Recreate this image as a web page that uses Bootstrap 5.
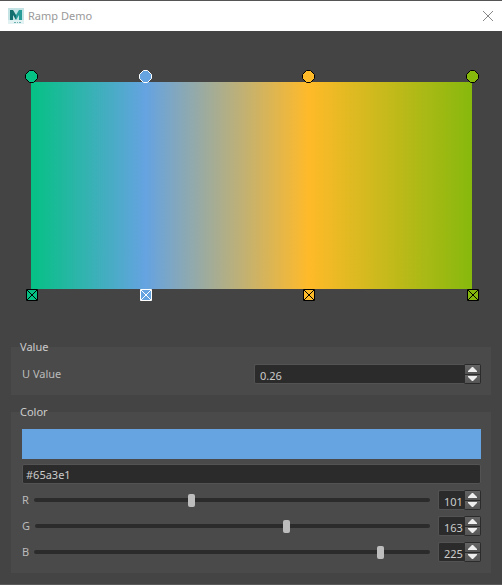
<!DOCTYPE html>
<html lang="en">
<head>
<meta charset="utf-8">
<meta name="viewport" content="width=device-width, initial-scale=1">
<title>Ramp Demo</title>
<link rel="stylesheet" href="https://cdn.jsdelivr.net/npm/bootstrap@5.3.0/dist/css/bootstrap.min.css">
<style>
  body { background: #444; color: #bbb; font: 11px/16px "Noto Sans", "Open Sans", sans-serif; }
  .window { border-top: 1px solid #555; border-bottom: 1px solid #5a5a5a; }
  .titlebar { background: #fff; height: 30px; padding: 0 8px; color: #999; }
  .titlebar h1 { font-size: 11px; line-height: 16px; font-weight: 400; }
  .close-btn { color: #888; line-height: 0; }
  .ramp-area { padding: 51px 30px 50px 31px; }
  .ramp { height: 207px; background: linear-gradient(to right, #05c184 0%, #65a3e1 26%, #ffba29 63%, #87b90d 100%); }
  .stop { position: absolute; padding: 0; border: 0; background: none; line-height: 0; color: #000; left: var(--at); }
  .stop.active { color: #fff; }
  .stop svg { fill: var(--tint); stroke: currentColor; display: block; }
  .stop-pos { top: -12px; margin-left: -6px; }
  .stop-del { top: 207px; margin-left: -5px; }
  .panels { padding: 0 11px 11px; }
  .group { background: #4a4a4a; padding: 0 10px 11px 11px; }
  .group + .group { margin-top: 9px; }
  .group legend { font-size: 11px; line-height: 16px; margin: 0 0 0 -2px; color: #ccc; }
  .value-row { padding-top: 9px; }
  .swatch { height: 30px; margin-top: 9px; background: #65a3e1; }
  .field { background: #2b2b2b; color: #ccc; border: 1px solid #535353; border-radius: 2px; height: 20px; line-height: 16px; padding: 1px 3px 0; outline: 0; min-width: 0; appearance: textfield; -moz-appearance: textfield; }
  .field::-webkit-inner-spin-button { appearance: none; -webkit-appearance: none; margin: 0; }
  .spin .field { border-right: 0; border-radius: 2px 0 0 2px; padding: 2px 5px 0; }
  .spin-value { width: 227px; }
  .spin-channel { width: 43px; }
  .spin.spin-channel .field { width: 26px; padding: 2px 0 0 5px; }
  .steps { width: 17px; height: 20px; background: #2b2b2b; border-radius: 2px; padding: 1px; gap: 1px; }
  .steps button { border: 0; padding: 0; background: linear-gradient(#646464, #555); line-height: 0; flex: 1 1 0; min-height: 0; }
  .steps svg { fill: #eee; display: block; margin: auto; }
  .hex { margin-top: 5px; }
  .channels { padding: 6px 0 0; gap: 6px; }
  .channels .slider { appearance: none; -webkit-appearance: none; background: none; height: 14px; margin: 0 8px 0 5px; min-width: 0; }
  .slider::-webkit-slider-runnable-track { height: 4px; border-radius: 2px; background: #2b2b2b; }
  .slider::-webkit-slider-thumb { -webkit-appearance: none; width: 7px; height: 13px; margin-top: -4px; border-radius: 2px; background: #bdbdbd; }
  .slider::-moz-range-track { height: 4px; border-radius: 2px; background: #2b2b2b; }
  .slider::-moz-range-thumb { width: 7px; height: 13px; border: 0; border-radius: 2px; background: #bdbdbd; }
</style>
<script src="https://cdn.jsdelivr.net/npm/bootstrap@5.3.0/dist/js/bootstrap.bundle.min.js" defer></script>
</head>
<body>
<svg width="0" height="0" class="position-absolute" aria-hidden="true">
  <symbol id="up" viewBox="0 0 9 5"><path d="M4 0h1l4 4v1H0V4z"/></symbol>
  <symbol id="down" viewBox="0 0 9 5"><path d="M0 0h9v1L5 5H4L0 1z"/></symbol>
  <symbol id="dot" viewBox="0 0 13 13"><path d="M4.500 .5h4l4 4v4l-4 4h-4l-4-4v-4z"/></symbol>
  <symbol id="cross" viewBox="0 0 12 12"><path d="M.5.5h11v11H.5z"/><path d="M1 1l10 10M11 1L1 11"/></symbol>
</svg>
<main class="window">
  <header class="titlebar d-flex align-items-center">
    <svg width="16" height="16" viewBox="0 0 16 16" aria-hidden="true">
      <path fill="#c4e3e4" d="M0 0h16v16H0z"/>
      <path fill="#e2f1f2" d="M0 12h16v4H0z"/>
      <path fill="#13706f" d="M2 2h3l3 5v5L5 7v5H2z"/>
      <path fill="#279c99" d="M14 2h-3L8 7v5l3-5v5h3z"/>
      <path stroke="#6eafb0" d="M6 14.500h2M9 14.500h1M11 14.500h2"/>
    </svg>
    <h1 class="m-0 ps-1 flex-grow-1">Ramp Demo</h1>
    <button type="button" class="btn p-0 border-0 close-btn" aria-label="Close">
      <svg width="12" height="12" viewBox="0 0 12 12" fill="none" stroke="currentColor"><path d="M1 1l10 10M11 1L1 11"/></svg>
    </button>
  </header>

  <section class="ramp-area" aria-label="Color ramp">
    <div class="ramp position-relative">
      <button type="button" class="stop stop-pos" style="--at:0%;--tint:#05c184" aria-label="Stop 1"><svg width="13" height="13"><use href="#dot"/></svg></button>
      <button type="button" class="stop stop-pos active" style="--at:25.9%;--tint:#65a3e1" aria-label="Stop 2"><svg width="13" height="13"><use href="#dot"/></svg></button>
      <button type="button" class="stop stop-pos" style="--at:62.9%;--tint:#ffba29" aria-label="Stop 3"><svg width="13" height="13"><use href="#dot"/></svg></button>
      <button type="button" class="stop stop-pos" style="--at:100%;--tint:#87b90d" aria-label="Stop 4"><svg width="13" height="13"><use href="#dot"/></svg></button>
      <button type="button" class="stop stop-del" style="--at:0%;--tint:#05c184" aria-label="Delete stop 1"><svg width="12" height="12"><use href="#cross"/></svg></button>
      <button type="button" class="stop stop-del active" style="--at:25.9%;--tint:#65a3e1" aria-label="Delete stop 2"><svg width="12" height="12"><use href="#cross"/></svg></button>
      <button type="button" class="stop stop-del" style="--at:62.9%;--tint:#ffba29" aria-label="Delete stop 3"><svg width="12" height="12"><use href="#cross"/></svg></button>
      <button type="button" class="stop stop-del" style="--at:100%;--tint:#87b90d" aria-label="Delete stop 4"><svg width="12" height="12"><use href="#cross"/></svg></button>
    </div>
  </section>

  <form class="panels">
    <fieldset class="group">
      <legend class="float-none w-auto">Value</legend>
      <div class="value-row d-flex align-items-center justify-content-between">
        <label for="u">U Value</label>
        <div class="spin spin-value d-flex">
          <input id="u" class="field flex-grow-1" type="number" step="0.01" value="0.26">
          <div class="steps d-flex flex-column flex-shrink-0">
            <button type="button" aria-label="Increase U"><svg width="9" height="5"><use href="#up"/></svg></button>
            <button type="button" aria-label="Decrease U"><svg width="9" height="5"><use href="#down"/></svg></button>
          </div>
        </div>
      </div>
    </fieldset>

    <fieldset class="group">
      <legend class="float-none w-auto">Color</legend>
      <div class="swatch"></div>
      <input class="field hex w-100 d-block" type="text" value="#65a3e1" aria-label="Hex color">
      <div class="channels d-flex flex-column">
        <div class="d-flex align-items-center">
          <label for="r">R</label>
          <input id="r" class="slider flex-grow-1" type="range" min="0" max="255" value="101">
          <div class="spin spin-channel d-flex">
            <input class="field" type="number" value="101" aria-label="Red value">
            <div class="steps d-flex flex-column flex-shrink-0">
              <button type="button" aria-label="Increase red"><svg width="9" height="5"><use href="#up"/></svg></button>
              <button type="button" aria-label="Decrease red"><svg width="9" height="5"><use href="#down"/></svg></button>
            </div>
          </div>
        </div>
        <div class="d-flex align-items-center">
          <label for="g">G</label>
          <input id="g" class="slider flex-grow-1" type="range" min="0" max="255" value="163">
          <div class="spin spin-channel d-flex">
            <input class="field" type="number" value="163" aria-label="Green value">
            <div class="steps d-flex flex-column flex-shrink-0">
              <button type="button" aria-label="Increase green"><svg width="9" height="5"><use href="#up"/></svg></button>
              <button type="button" aria-label="Decrease green"><svg width="9" height="5"><use href="#down"/></svg></button>
            </div>
          </div>
        </div>
        <div class="d-flex align-items-center">
          <label for="b">B</label>
          <input id="b" class="slider flex-grow-1" type="range" min="0" max="255" value="225">
          <div class="spin spin-channel d-flex">
            <input class="field" type="number" value="225" aria-label="Blue value">
            <div class="steps d-flex flex-column flex-shrink-0">
              <button type="button" aria-label="Increase blue"><svg width="9" height="5"><use href="#up"/></svg></button>
              <button type="button" aria-label="Decrease blue"><svg width="9" height="5"><use href="#down"/></svg></button>
            </div>
          </div>
        </div>
      </div>
    </fieldset>
  </form>
</main>
</body>
</html>
